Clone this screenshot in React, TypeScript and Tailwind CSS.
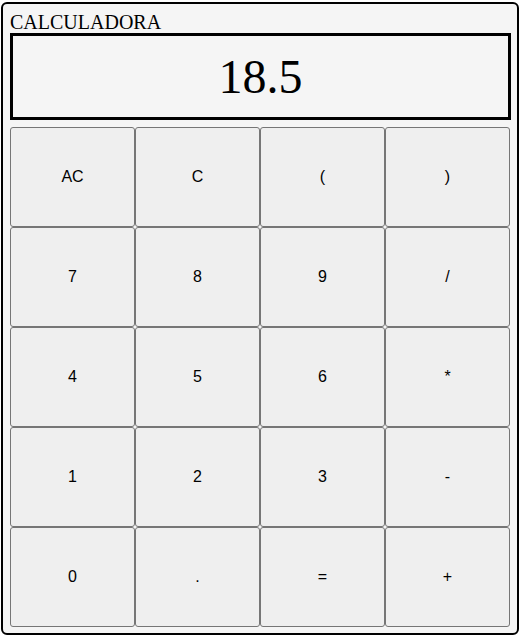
const keys = [
  "AC", "C", "(", ")",
  "7", "8", "9", "/",
  "4", "5", "6", "*",
  "1", "2", "3", "-",
  "0", ".", "=", "+",
];

export default function App() {
  return (
    <div className="w-[521px] h-[638px] bg-white pt-[2px] pl-[1px]">
      <div className="w-[518px] h-[633px] bg-[#f5f5f5] border-2 border-black rounded-[6px] pl-[7px] pt-[7px]">
        <div className="font-['Liberation_Serif',serif] text-[20px] leading-[22px] text-black h-[22px]">
          CALCULADORA
        </div>
        <div className="w-[501px] h-[87px] border-[3px] border-black bg-[#f5f5f5] flex items-center justify-center font-['Liberation_Serif',serif] text-[48px] text-black">
          18.5
        </div>
        <div className="grid grid-cols-[repeat(4,125px)] grid-rows-[repeat(5,100px)] mt-[7px]">
          {keys.map((k) => (
            <button
              key={k}
              className="bg-[#efefef] border border-[#767676] rounded-[3px] font-['Liberation_Sans',Arial,sans-serif] text-[16px] text-black flex items-center justify-center"
            >
              {k}
            </button>
          ))}
        </div>
      </div>
    </div>
  );
}
